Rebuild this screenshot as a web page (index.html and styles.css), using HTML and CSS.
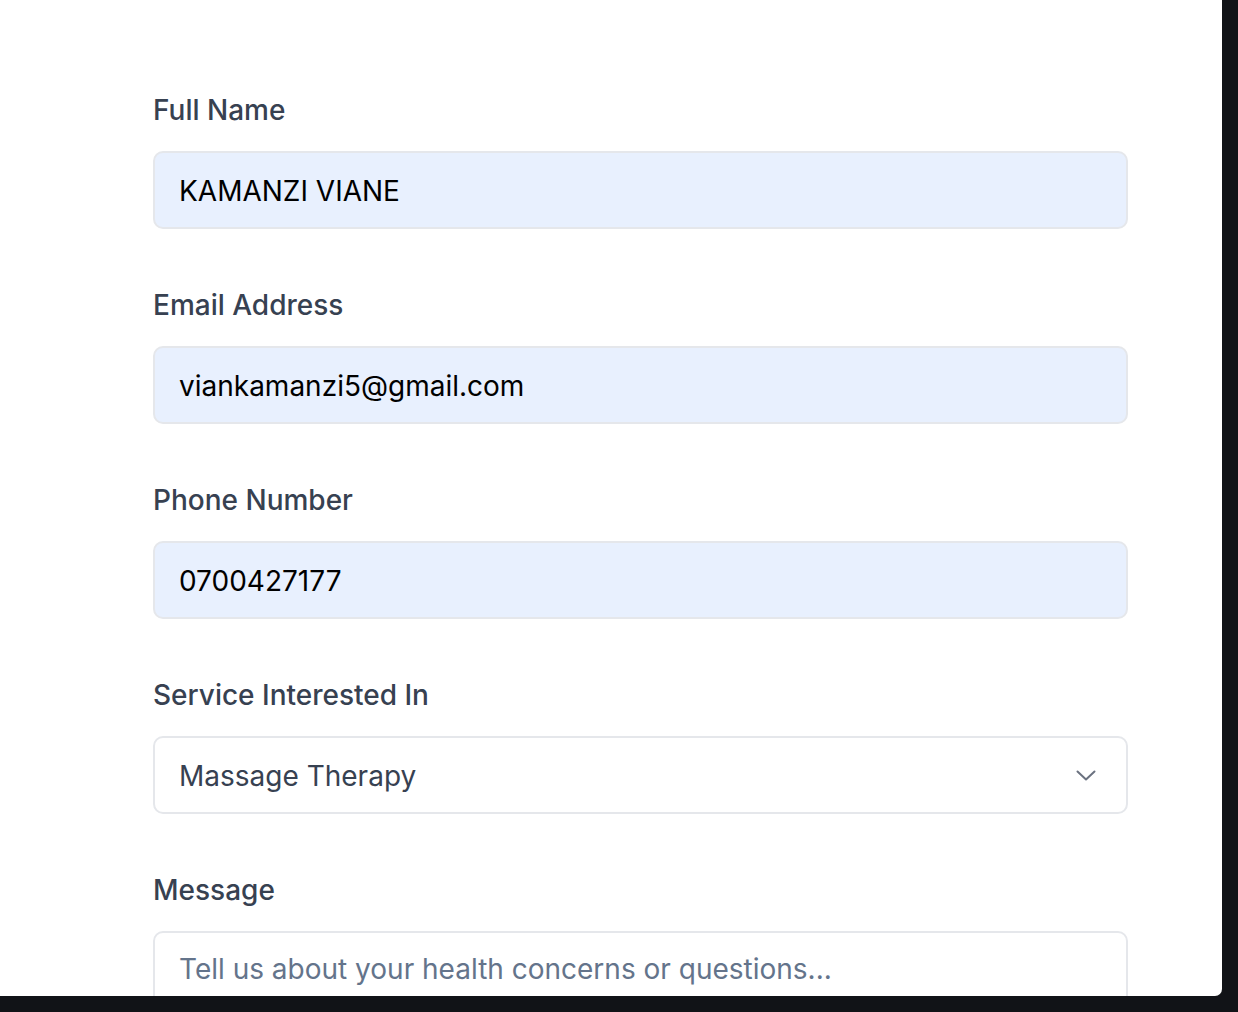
FILE: index.html
```html
<!DOCTYPE html>
<html lang="en">
<head>
<meta charset="utf-8">
<title>Contact Form</title>
<link rel="stylesheet" href="styles.css">
</head>
<body>
<div class="panel">
  <form class="form">
    <div class="field">
      <label class="label" for="name">Full Name</label>
      <input class="input filled" id="name" type="text" value="KAMANZI VIANE">
    </div>
    <div class="field">
      <label class="label" for="email">Email Address</label>
      <input class="input filled" id="email" type="email" value="viankamanzi5@gmail.com">
    </div>
    <div class="field">
      <label class="label" for="phone">Phone Number</label>
      <input class="input filled" id="phone" type="tel" value="0700427177">
    </div>
    <div class="field">
      <label class="label" for="service">Service Interested In</label>
      <div class="select-wrap">
        <select class="input select" id="service">
          <option>Massage Therapy</option>
        </select>
        <svg class="chevron" width="20" height="11" viewBox="0 0 20 11" fill="none" stroke="#6b7280" stroke-width="2" stroke-linecap="round" stroke-linejoin="round"><path d="M1.5 1.5 L10 9.5 L18.5 1.5"/></svg>
      </div>
    </div>
    <div class="field">
      <label class="label" for="message">Message</label>
      <textarea class="input textarea" id="message" placeholder="Tell us about your health concerns or questions..."></textarea>
    </div>
  </form>
</div>
</body>
</html>
```
FILE: styles.css
```css
* { box-sizing: border-box; }
html, body { margin: 0; padding: 0; }
body {
  background: #111317;
  width: 1238px;
  height: 1012px;
  overflow: hidden;
  font-family: Inter, "Liberation Sans", sans-serif;
}
.panel {
  width: 1222px;
  height: 996px;
  background: #ffffff;
  border-bottom-right-radius: 7px;
  overflow: hidden;
  padding: 89px 0 0 153px;
}
.form {
  width: 975px;
  display: flex;
  flex-direction: column;
  gap: 55px;
}
.field {
  display: flex;
  flex-direction: column;
}
.label {
  font-size: 28px;
  line-height: 42px;
  font-weight: 500;
  color: #374151;
  margin-bottom: 20px;
}
.input {
  display: block;
  width: 975px;
  height: 78px;
  border: 2px solid #e5e7eb;
  border-radius: 10px;
  background: #ffffff;
  font-family: Inter, "Liberation Sans", sans-serif;
  font-size: 28px;
  line-height: 42px;
  padding: 2px 24px 0;
  color: #000000;
  outline: none;
  margin: 0;
}
.filled {
  background: #e8f0fe;
}
.select-wrap {
  position: relative;
}
.select {
  appearance: none;
  -webkit-appearance: none;
  color: #374151;
}
.chevron {
  position: absolute;
  right: 32px;
  top: 34px;
  pointer-events: none;
}
.textarea {
  height: 140px;
  padding-top: 15px;
  resize: none;
}
.textarea::placeholder {
  color: #64748b;
  opacity: 1;
}
```
